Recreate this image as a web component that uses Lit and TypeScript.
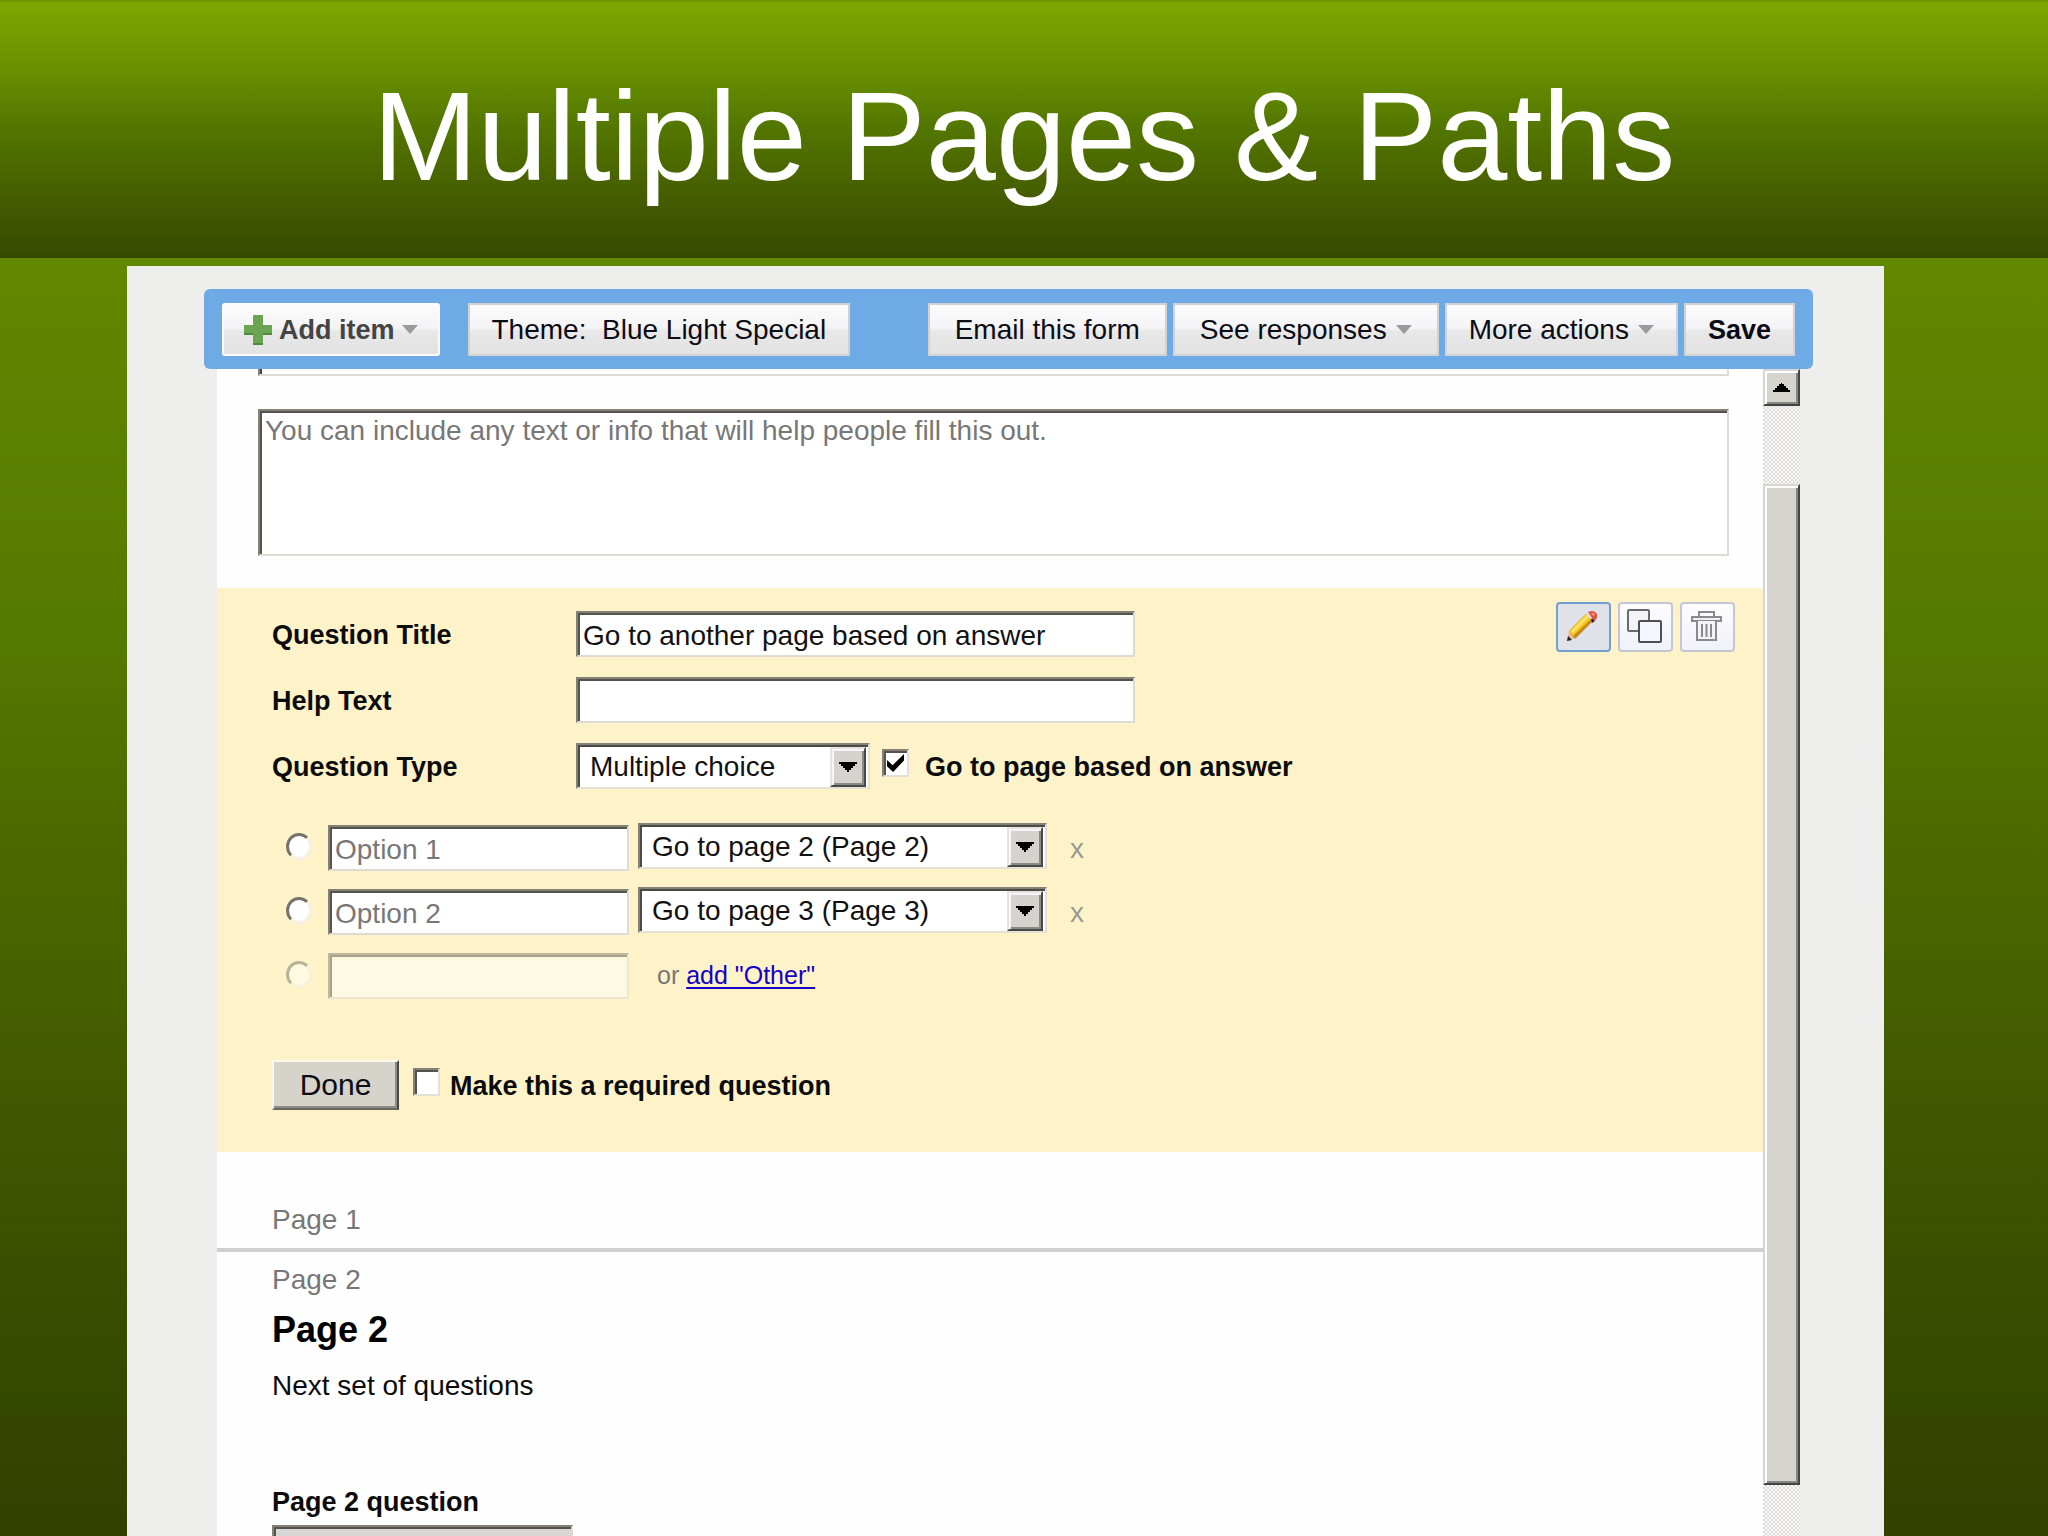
import { LitElement, html, css, svg } from "lit";
import { customElement, property } from "lit/decorators.js";

const dropArrow = svg`<svg class="caret" viewBox="0 0 16 9" aria-hidden="true"><path d="M0 0H16L8 9Z" fill="#9a9a9a" /></svg>`;

@customElement("classic-select")
class ClassicSelect extends LitElement {
  @property() label = "";
  @property({ attribute: false }) options: string[] = [];

  static styles = css`
    :host { display: block; }
    .box {
      display: grid;
      grid-template-columns: 1fr 36px;
      height: 46px;
      box-sizing: border-box;
      background: #fff;
      border: 2px solid;
      border-color: #858075 #e4e0d6 #e4e0d6 #858075;
      box-shadow: inset 2px 2px #4c4a46;
      padding: 2px 2px 0 2px;
    }
    .select {
      grid-area: 1 / 1 / 2 / 3;
      appearance: none;
      border: 0;
      background: transparent;
      margin: 0;
      padding: 0 40px 0 10px;
      min-width: 0;
      font: 28px/34px "Liberation Sans", Arial, sans-serif;
      color: #111;
      outline: none;
    }
    .arrow {
      grid-area: 1 / 2;
      box-sizing: border-box;
      background: #d6d3ce;
      border: 2px solid;
      border-color: #e6e4e0 #484848 #484848 #e6e4e0;
      box-shadow: inset 2px 2px #f7f6f4, inset -2px -2px #8a8a86;
      display: grid;
      place-items: center;
      pointer-events: none;
    }
    .glyph { width: 18px; height: 10px; }
  `;

  render() {
    return html`<div class="box">
      <select class="select" aria-label=${this.label}>
        ${this.options.map((o) => html`<option>${o}</option>`)}
      </select>
      <span class="arrow"><svg class="glyph" viewBox="0 0 18 10" aria-hidden="true"><path d="M0 0H18V2H16V4H14V6H12V8H10V10H8V8H6V6H4V4H2V2H0Z" /></svg></span>
    </div>`;
  }
}

@customElement("app-root")
class AppRoot extends LitElement {
  static styles = css`
    :host {
      display: block;
      font-family: "Liberation Sans", Arial, sans-serif;
      color: #0c0c0c;
    }
    .slide {
      height: 100vh;
      overflow: hidden;
      display: flex;
      flex-direction: column;
      background: linear-gradient(#628800 0, #628800 17%, #547900 42%, #4d6b00 53%, #435a00 70%, #3a4d00 84%, #324000 100%);
    }
    .banner {
      flex: none;
      height: 258px;
      box-sizing: border-box;
      padding-top: 14px;
      border-top: 2px solid #6f9600;
      display: grid;
      place-items: center;
      background: linear-gradient(#7da700 0, #6a9200 25%, #527500 50%, #455d00 76%, #384900 100%);
    }
    .title {
      margin: 0;
      font-size: 126px;
      line-height: 144px;
      font-weight: 400;
      color: #fff;
    }
    .panel {
      flex: 1;
      min-height: 0;
      display: flex;
      flex-direction: column;
      margin: 8px 164px 0 127px;
      padding-top: 23px;
      background: #eeeeec;
    }
    .toolbar {
      flex: none;
      display: flex;
      gap: 6px;
      height: 80px;
      box-sizing: border-box;
      margin: 0 71px 0 77px;
      padding: 14px 18px 13px;
      border-radius: 6px;
      background: #6eaae6;
    }
    .tool {
      display: flex;
      align-items: center;
      gap: 9px;
      margin: 0;
      padding: 0 22px;
      border: 2px solid #d0d2d4;
      background: linear-gradient(#fbfbfc 0, #f4f4f6 46%, #e8e8e9 54%, #e2e2e3 100%);
      font: 28px/34px "Liberation Sans", Arial, sans-serif;
      color: #0c0c14;
      white-space: pre;
    }
    .roomy { padding: 0 25px; }
    .add {
      gap: 7px;
      padding: 0 20px;
      border-color: #fcfcfc;
      border-radius: 3px;
      margin-right: 22px;
      color: #444;
    }
    .strong { font-weight: 700; font-size: 27px; }
    .spacer { flex: 1; }
    .plus { width: 28px; height: 30px; }
    .caret { width: 16px; height: 9px; }
    .body {
      flex: 1;
      min-height: 0;
      display: flex;
      margin: 0 84px 0 90px;
    }
    .form {
      flex: 1;
      min-width: 0;
      overflow: hidden;
      background: #fefefe;
    }
    .field {
      display: block;
      box-sizing: border-box;
      width: 100%;
      height: 46px;
      margin: 0;
      padding: 3px 5px 0;
      border: 2px solid;
      border-color: #858075 #dedbd2 #dedbd2 #858075;
      border-radius: 0;
      box-shadow: inset 2px 2px #55534e;
      background: #fff;
      outline: none;
      font: 28px/34px "Liberation Sans", Arial, sans-serif;
      color: #111;
    }
    .intro { padding: 0 34px 32px 41px; }
    .heading { height: 7px; border-top: 0; box-shadow: inset 2px 0 #444; padding: 0 5px; }
    .about { height: 147px; margin-top: 33px; padding: 3px 5px; resize: none; overflow: hidden; }
    .field::placeholder { color: #777; opacity: 1; }
    .question {
      display: flex;
      justify-content: space-between;
      align-items: flex-start;
      padding: 14px 28px 42px 55px;
      background: #fef3c8;
    }
    .editor { padding-top: 9px; }
    .grid {
      display: grid;
      grid-template-columns: 304px 559px;
      align-items: center;
      row-gap: 20px;
    }
    .label { padding-top: 2px; font-weight: 700; font-size: 27px; line-height: 34px; }
    .kind { display: flex; align-items: center; white-space: nowrap; }
    .type { width: 294px; flex: none; }
    .check {
      appearance: none;
      flex: none;
      width: 27px;
      height: 28px;
      margin: 0 0 6px;
      border: 2px solid;
      border-color: #858075 #e4e0d6 #e4e0d6 #858075;
      box-shadow: inset 2px 2px #55534e;
      background: #fff;
      display: grid;
      place-items: center;
    }
    .check:checked::before {
      content: "";
      width: 17px;
      height: 18px;
      background: #000;
      clip-path: polygon(0 33%, 33% 62%, 100% 0, 100% 36%, 36% 100%, 0 68%);
    }
    .branch { margin-left: 12px; margin-right: 16px; }
    .options {
      display: flex;
      flex-direction: column;
      gap: 16px;
      margin-top: 34px;
      padding-left: 14px;
    }
    .option { display: flex; align-items: center; height: 48px; }
    .radio {
      appearance: none;
      flex: none;
      width: 26px;
      height: 27px;
      margin: 0 16px 1px 0;
      border: 3px solid;
      border-color: #77726a #f4f0e4 #f4f0e4 #77726a;
      border-radius: 50%;
      background: #fff;
    }
    .answer { width: 301px; align-self: flex-end; }
    .target { width: 409px; margin-left: 9px; align-self: flex-start; }
    .remove {
      margin: 0 0 0 21px;
      padding: 3px 2px 0;
      border: 0;
      background: none;
      font: 28px/34px "Liberation Sans", Arial, sans-serif;
      color: #9a9a94;
    }
    .ghost { opacity: 0.5; }
    .other { margin-left: 28px; font-size: 25px; line-height: 34px; color: #777; }
    .link { color: #1400c8; text-decoration-thickness: 2px; text-underline-offset: 3px; }
    .finish { display: flex; align-items: center; margin-top: 61px; }
    .done {
      width: 127px;
      height: 50px;
      padding: 0;
      border: 2px solid;
      border-color: #fbf8ee #484848 #6a675f #fbf8ee;
      box-shadow: inset -2px -2px #8f8c86;
      background: #d6d3cb;
      font: 30px/34px "Liberation Sans", Arial, sans-serif;
      color: #0c0c14;
    }
    .required { margin-left: 14px; margin-right: 10px; }
    .actions { display: flex; gap: 7px; }
    .action {
      width: 55px;
      height: 50px;
      padding: 0;
      border: 2px solid #c4c6d6;
      border-radius: 4px;
      background: linear-gradient(#fdfdfe, #f0f2fa);
    }
    .active { border-color: #739fd0; background: #e0e2ea; }
    .icon { display: block; width: 51px; height: 46px; }
    .page { padding: 11px 56px 0 55px; }
    .first { padding-top: 51px; padding-bottom: 11px; border-bottom: 4px solid #d0cfd0; }
    .crumb { margin: 0; font-size: 28px; line-height: 34px; color: #777; }
    .name { margin: 11px 0 17px; font-size: 36px; line-height: 44px; color: #000; }
    .note { margin: 0 0 82px; font-size: 28px; line-height: 34px; }
    .reply { width: 301px; margin-top: 6px; background: #d8d7d4; }
    .scrollbar {
      flex: none;
      width: 37px;
      display: flex;
      flex-direction: column;
      background: repeating-conic-gradient(#dcd9d6 0 25%, #fbfafa 0 50%) 0 0 / 4px 4px;
    }
    .up, .thumb {
      box-sizing: border-box;
      margin: 0;
      padding: 0;
      border: 2px solid;
      border-color: #d9d6d2 #444 #444 #d9d6d2;
      box-shadow: inset 2px 2px #fff, inset -2px -2px #858582;
      background: #d6d4ce;
    }
    .up { height: 37px; display: grid; place-items: center; }
    .point { width: 17px; height: 9px; }
    .thumb { flex: 1; margin: 78px 0 51px; }
  `;

  private option(n: number) {
    return html`<div class="option">
      <input class="radio" type="radio" name="choice" aria-label="Option ${n}" />
      <input class="field answer" type="text" placeholder="Option ${n}" aria-label="Option ${n} text" />
      <classic-select class="target" label="Option ${n} target" .options=${[`Go to page ${n + 1} (Page ${n + 1})`]}></classic-select>
      <button class="remove" type="button" aria-label="Remove option ${n}">x</button>
    </div>`;
  }

  render() {
    return html`<main class="slide">
      <header class="banner"><h1 class="title">Multiple Pages &amp; Paths</h1></header>
      <section class="panel">
        <nav class="toolbar">
          <button class="tool add strong">
            <svg class="plus" viewBox="0 0 28 30" aria-hidden="true">
              <path d="M9 0H19V10H28V20H19V30H9V20H0V10H9Z" fill="#4d8a3a" />
              <path d="M9 0H19V10H28V18H19V28H9V18H0V10H9Z" fill="#6ba552" />
            </svg>Add item${dropArrow}</button>
          <button class="tool">${"Theme:  Blue Light Special"}</button>
          <span class="spacer"></span>
          <button class="tool roomy">Email this form</button>
          <button class="tool roomy">See responses${dropArrow}</button>
          <button class="tool">More actions${dropArrow}</button>
          <button class="tool strong">Save</button>
        </nav>
        <div class="body">
          <form class="form" @submit=${(e: Event) => e.preventDefault()}>
            <div class="intro">
              <input class="field heading" type="text" aria-label="Form title" />
              <textarea class="field about" aria-label="Form description" placeholder="You can include any text or info that will help people fill this out."></textarea>
            </div>
            <section class="question">
              <div class="editor">
                <div class="grid">
                  <label class="label" for="title">Question Title</label>
                  <input class="field" id="title" type="text" .value=${"Go to another page based on answer"} />
                  <label class="label" for="help">Help Text</label>
                  <input class="field" id="help" type="text" />
                  <span class="label">Question Type</span>
                  <div class="kind">
                    <classic-select class="type" label="Question Type" .options=${["Multiple choice"]}></classic-select>
                    <input class="check branch" id="branch" type="checkbox" checked />
                    <label class="label" for="branch">Go to page based on answer</label>
                  </div>
                </div>
                <div class="options">
                  ${this.option(1)} ${this.option(2)}
                  <div class="option">
                    <input class="radio ghost" type="radio" name="choice" aria-label="New option" />
                    <input class="field answer ghost" type="text" aria-label="New option text" />
                    <span class="other">or <a class="link" href="#other">add "Other"</a></span>
                  </div>
                </div>
                <div class="finish">
                  <button class="done" type="button">Done</button>
                  <input class="check required" id="required" type="checkbox" />
                  <label class="label" for="required">Make this a required question</label>
                </div>
              </div>
              <div class="actions">
                <button class="action active" type="button" aria-label="Edit">
                  <svg class="icon" viewBox="2 2 51 46" aria-hidden="true">
                    <path d="M11 39L13 29L19 36Z" fill="#e8b898" />
                    <path d="M11 39L12 34L16 38Z" fill="#222" />
                    <path d="M13 29L30 12L37 19L19 37Z" fill="#c98a1c" />
                    <path d="M13 29L30 12L35 17L17 34Z" fill="#f6c71f" />
                    <path d="M15 29L31 13L33 15L17 31Z" fill="#fbe26a" />
                    <path d="M30 12L33 10L39 18L37 20Z" fill="#ddd" />
                    <path d="M35 17L38 16L39 19L36 21Z" fill="#222" />
                    <path d="M32 10Q38 7 41 12Q42 17 38 19Z" fill="#e0533e" />
                    <path d="M35 11Q38 10 39 13L37 14Z" fill="#f59a86" />
                  </svg>
                </button>
                <button class="action" type="button" aria-label="Duplicate">
                  <svg class="icon" viewBox="2 2 51 46" aria-hidden="true">
                    <rect x="10" y="8" width="21" height="21" rx="1" fill="#f4f4f8" stroke="#6a6a6c" stroke-width="2" />
                    <rect x="21" y="19" width="22" height="21" rx="1" fill="#f3f6ff" stroke="#505054" stroke-width="2" />
                  </svg>
                </button>
                <button class="action" type="button" aria-label="Delete">
                  <svg class="icon" viewBox="2 2 51 46" aria-hidden="true" fill="none" stroke="#8a8a8c" stroke-width="2">
                    <path d="M19 14V10H34V14" />
                    <rect x="12" y="15" width="29" height="4" fill="#eee" />
                    <path d="M17 19V38H36V19" fill="#f4f4f6" />
                    <path d="M22 22V35M26.500 22V35M31 22V35" />
                  </svg>
                </button>
              </div>
            </section>
            <section class="page first"><p class="crumb">Page 1</p></section>
            <section class="page">
              <p class="crumb">Page 2</p>
              <h2 class="name">Page 2</h2>
              <p class="note">Next set of questions</p>
              <label class="label" for="reply">Page 2 question</label>
              <input class="field reply" id="reply" type="text" />
            </section>
          </form>
          <div class="scrollbar">
            <button class="up" aria-label="Scroll up"><svg class="point" viewBox="0 0 17 9" aria-hidden="true"><path d="M0 9V7H2V5H4V3H6V1H8V0H9V1H11V3H13V5H15V7H17V9Z" /></svg></button>
            <div class="thumb"></div>
          </div>
        </div>
      </section>
    </main>`;
  }
}
